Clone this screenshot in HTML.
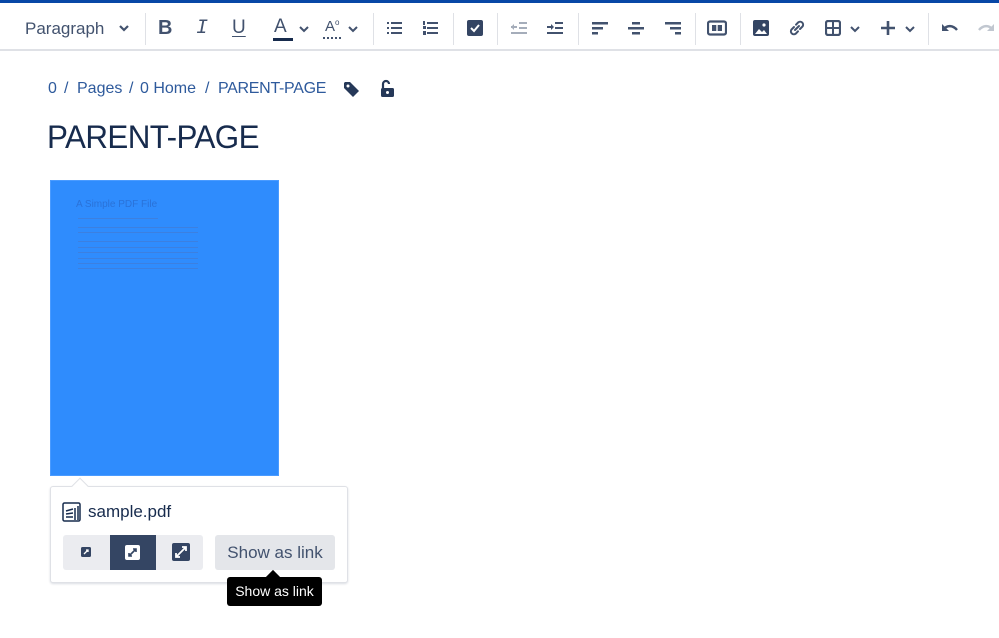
<!DOCTYPE html>
<html><head><meta charset="utf-8"><style>
*{box-sizing:border-box;margin:0;padding:0}
body{width:999px;height:638px;background:#fff;font-family:"Liberation Sans",sans-serif;position:relative;overflow:hidden;color:#172b4d}
.topbar{position:absolute;left:0;top:0;width:999px;height:3px;background:#0747a6}
.tb{position:absolute;left:0;top:3px;width:999px;height:48px;border-bottom:2px solid #dfe1e6}
.ic{position:absolute;top:17px}
.sep{position:absolute;top:10px;width:1px;height:32px;background:#dfe1e6}
.abs{position:absolute}
.bc{position:absolute;top:80px;font-size:16px;color:#2e5a9c;white-space:nowrap}
</style></head><body>
<div class="topbar"></div>
<div class="tb">
<div class="abs" style="left:25px;top:16px;font-size:17px;color:#42526e">Paragraph</div>
<svg class="ic" style="left:118px;top:21px" width="12" height="8"><path d="M2 2l4 4 4-4" stroke="#42526e" stroke-width="2.2" fill="none"/></svg>
<div class="sep" style="left:145px"></div>
<div class="abs" style="left:158px;top:14px;font-size:20px;font-weight:bold;color:#42526e">B</div>
<div class="abs" style="left:196px;top:14px;font-size:20px;font-style:italic;font-family:'Liberation Mono';color:#42526e">I</div>
<div class="abs" style="left:232px;top:14px;font-size:19px;color:#42526e;text-decoration:underline;text-underline-offset:3px">U</div>
<div class="abs" style="left:274px;top:13px;font-size:19px;color:#42526e">A</div>
<div class="abs" style="left:273px;top:35px;width:20px;height:3px;background:#172b4d"></div>
<svg class="ic" style="left:298px;top:22px" width="12" height="8"><path d="M2 2l4 4 4-4" stroke="#42526e" stroke-width="2" fill="none"/></svg>
<div class="abs" style="left:325px;top:15px;font-size:15px;color:#42526e">A<sup style="font-size:8px">o</sup></div>
<div class="abs" style="left:323px;top:34px;width:18px;height:1px;border-top:2px dotted #42526e"></div>
<svg class="ic" style="left:347px;top:22px" width="12" height="8"><path d="M2 2l4 4 4-4" stroke="#42526e" stroke-width="2" fill="none"/></svg>
<div class="sep" style="left:373px"></div>
<svg class="ic" style="left:387px" width="16" height="16"><g fill="#42526e"><rect x="0" y="2" width="2" height="2"/><rect x="0" y="7" width="2" height="2"/><rect x="0" y="12" width="2" height="2"/><rect x="4" y="2" width="11" height="2"/><rect x="4" y="7" width="11" height="2"/><rect x="4" y="12" width="11" height="2"/></g></svg>
<svg class="ic" style="left:423px" width="16" height="16"><g fill="#42526e"><rect x="0" y="1" width="2" height="4"/><rect x="0" y="6" width="3" height="3"/><rect x="0" y="11" width="3" height="4"/><rect x="4" y="2" width="11" height="2"/><rect x="4" y="7" width="11" height="2"/><rect x="4" y="12" width="11" height="2"/></g></svg>
<div class="sep" style="left:453px"></div>
<svg class="ic" style="left:467px" width="16" height="16"><rect width="16" height="16" rx="2" fill="#344563"/><path d="M4 8l3 3 5-6" stroke="#fff" stroke-width="2" fill="none"/></svg>
<div class="sep" style="left:497px"></div>
<svg class="ic" style="left:511px" width="16" height="16"><g fill="#a5adba"><rect x="0" y="6" width="6" height="2"/><path d="M0 7l3-3v6z"/><rect x="8" y="2" width="8" height="2"/><rect x="8" y="7" width="8" height="2"/><rect x="0" y="12" width="16" height="2"/></g></svg>
<svg class="ic" style="left:547px" width="16" height="16"><g fill="#42526e"><rect x="0" y="6" width="5" height="2"/><path d="M7 7l-3-3v6z"/><rect x="8" y="2" width="8" height="2"/><rect x="8" y="7" width="8" height="2"/><rect x="0" y="12" width="16" height="2"/></g></svg>
<div class="sep" style="left:578px"></div>
<svg class="ic" style="left:592px" width="16" height="16"><g fill="#42526e"><rect x="0" y="2" width="16" height="2.5"/><rect x="0" y="7" width="11" height="2.5"/><rect x="0" y="12" width="6" height="2.5"/></g></svg>
<svg class="ic" style="left:628px" width="16" height="16"><g fill="#42526e"><rect x="4" y="2" width="8" height="2.5"/><rect x="0" y="7" width="16" height="2.5"/><rect x="4" y="12" width="8" height="2.5"/></g></svg>
<svg class="ic" style="left:665px" width="16" height="16"><g fill="#42526e"><rect x="0" y="2" width="16" height="2.5"/><rect x="5" y="7" width="11" height="2.5"/><rect x="10" y="12" width="6" height="2.5"/></g></svg>
<div class="sep" style="left:695px"></div>
<svg class="ic" style="left:707px" width="20" height="16"><rect x="1" y="1.5" width="18" height="13" rx="2" fill="none" stroke="#42526e" stroke-width="2.2"/><rect x="5" y="5" width="10" height="6" fill="#42526e"/><rect x="9.3" y="5" width="1.4" height="6" fill="#fff"/></svg>
<div class="sep" style="left:740px"></div>
<svg class="ic" style="left:753px" width="16" height="16"><rect width="16" height="16" rx="2" fill="#344563"/><path d="M2 14l4-5 3 3 2-2 3 4z" fill="#fff"/><circle cx="11" cy="5" r="1.6" fill="#fff"/></svg>
<svg class="ic" style="left:787px;top:15px" width="20" height="20"><path d="M8 12l4-4M7 9l-2.5 2.5a3 3 0 004.2 4.2L11 13.3M13 11l2.5-2.5a3 3 0 00-4.2-4.2L9 6.7" stroke="#42526e" stroke-width="2" fill="none" stroke-linecap="round"/></svg>
<svg class="ic" style="left:825px" width="16" height="16"><rect x="1" y="1" width="14" height="14" rx="2" fill="none" stroke="#42526e" stroke-width="2.2"/><path d="M8 1v14M1 8h14" stroke="#42526e" stroke-width="2"/></svg>
<svg class="ic" style="left:849px;top:22px" width="12" height="8"><path d="M2 2l4 4 4-4" stroke="#42526e" stroke-width="2" fill="none"/></svg>
<svg class="ic" style="left:880px" width="16" height="16"><path d="M8 1v14M1 8h14" stroke="#42526e" stroke-width="2.6"/></svg>
<svg class="ic" style="left:904px;top:22px" width="12" height="8"><path d="M2 2l4 4 4-4" stroke="#42526e" stroke-width="2" fill="none"/></svg>
<div class="sep" style="left:928px"></div>
<svg class="ic" style="left:941px" width="18" height="16"><path d="M3 9c3-4 9-4 13 1" stroke="#42526e" stroke-width="2.4" fill="none"/><path d="M1 4v7h7z" fill="#42526e"/></svg>
<svg class="ic" style="left:977px" width="18" height="16"><path d="M15 9c-3-4-9-4-13 1" stroke="#c1c7d0" stroke-width="2.4" fill="none"/><path d="M17 4v7h-7z" fill="#c1c7d0"/></svg>
</div>

<div class="bc" style="left:48px">0</div>
<div class="bc" style="left:64px">/</div>
<div class="bc" style="left:77px">Pages</div>
<div class="bc" style="left:129px">/</div>
<div class="bc" style="left:140px">0 Home</div>
<div class="bc" style="left:205px">/</div>
<div class="bc" style="left:218px;letter-spacing:-0.3px">PARENT-PAGE</div>
<svg class="abs" style="left:343px;top:81px" width="17" height="17"><path d="M1 2v5l9 9 6-6-9-9H2z" fill="#253858"/><circle cx="5" cy="5" r="1.5" fill="#fff"/></svg>
<svg class="abs" style="left:379px;top:79px" width="16" height="19"><path d="M4 9V5a3 3 0 016 0" stroke="#253858" stroke-width="2.2" fill="none"/><rect x="2" y="9" width="13" height="9" rx="1.5" fill="#253858"/><circle cx="8.5" cy="13.5" r="1.5" fill="#fff"/></svg>
<div class="abs" style="left:47px;top:119px;font-size:32px;color:#172b4d;letter-spacing:-0.6px;transform:scaleX(0.98);transform-origin:left">PARENT-PAGE</div>

<div class="abs" style="left:50px;top:180px;width:229px;height:296px;background:#2f8cfd;border:1px solid #4a9bff">
<div class="abs" style="left:25px;top:18px;font-size:10px;color:#2a72d8">A Simple PDF File</div>
<div class="abs" style="left:27px;top:37px;width:80px;height:1px;background:#3c80e0"></div>
<div class="abs" style="left:27px;top:46px;width:120px;height:6px;border-top:1px solid #3c80e0;border-bottom:1px solid #3c80e0"></div>
<div class="abs" style="left:27px;top:60px;width:120px;height:18px;border-top:1px solid #3c80e0;border-bottom:1px solid #3c80e0"></div>
<div class="abs" style="left:27px;top:66px;width:120px;height:6px;border-top:1px solid #3c80e0;border-bottom:1px solid #3c80e0"></div>
<div class="abs" style="left:27px;top:82px;width:120px;height:6px;border-top:1px solid #3c80e0;border-bottom:1px solid #3c80e0"></div>
</div>

<div class="abs" style="left:50px;top:486px;width:298px;height:97px;border:1px solid #dfe1e6;border-radius:3px;background:#fff;box-shadow:0 1px 2px rgba(9,30,66,.15)"></div>
<div class="abs" style="left:74px;top:480px;width:12px;height:12px;background:#fff;border-left:1px solid #dfe1e6;border-top:1px solid #dfe1e6;transform:rotate(45deg)"></div>
<svg class="abs" style="left:62px;top:502px" width="20" height="20"><rect x="1" y="1" width="17" height="18" rx="1.5" fill="none" stroke="#172b4d" stroke-width="1.5"/><path d="M4 9l7-2M4 12l7-1M4 15h7M13 6v12M16 4v14" stroke="#172b4d" stroke-width="1.5" fill="none"/></svg>
<div class="abs" style="left:88px;top:502px;font-size:17px;color:#172b4d">sample.pdf</div>
<div class="abs" style="left:63px;top:535px;width:140px;height:35px;background:#ebecf0;border-radius:3px"></div>
<div class="abs" style="left:110px;top:535px;width:46px;height:35px;background:#344563"></div>
<svg class="abs" style="left:81px;top:547px" width="10" height="10"><rect width="10" height="10" rx="1.5" fill="#344563"/><path d="M3 7l4-4M5 3h2v2" stroke="#fff" stroke-width="1.3" fill="none"/></svg>
<svg class="abs" style="left:125px;top:545px" width="15" height="15"><rect width="15" height="15" rx="2" fill="#fff"/><path d="M4 11l7-7M8 4h3v3M4 8v3h3" stroke="#344563" stroke-width="1.6" fill="none"/></svg>
<svg class="abs" style="left:172px;top:543px" width="18" height="18"><rect width="18" height="18" rx="2" fill="#344563"/><path d="M4 14l10-10M10 4h4v4M4 10v4h4" stroke="#fff" stroke-width="1.8" fill="none"/></svg>
<div class="abs" style="left:215px;top:535px;width:120px;height:35px;background:#e4e6ea;border-radius:3px;font-size:17px;color:#42526e;text-align:center;line-height:36px">Show as link</div>
<div class="abs" style="left:268px;top:572px;width:10px;height:10px;background:#000;transform:rotate(45deg)"></div>
<div class="abs" style="left:227px;top:577px;width:95px;height:29px;background:#000;border-radius:3px;color:#fff;font-size:14px;text-align:center;line-height:29px">Show as link</div>
</body></html>
